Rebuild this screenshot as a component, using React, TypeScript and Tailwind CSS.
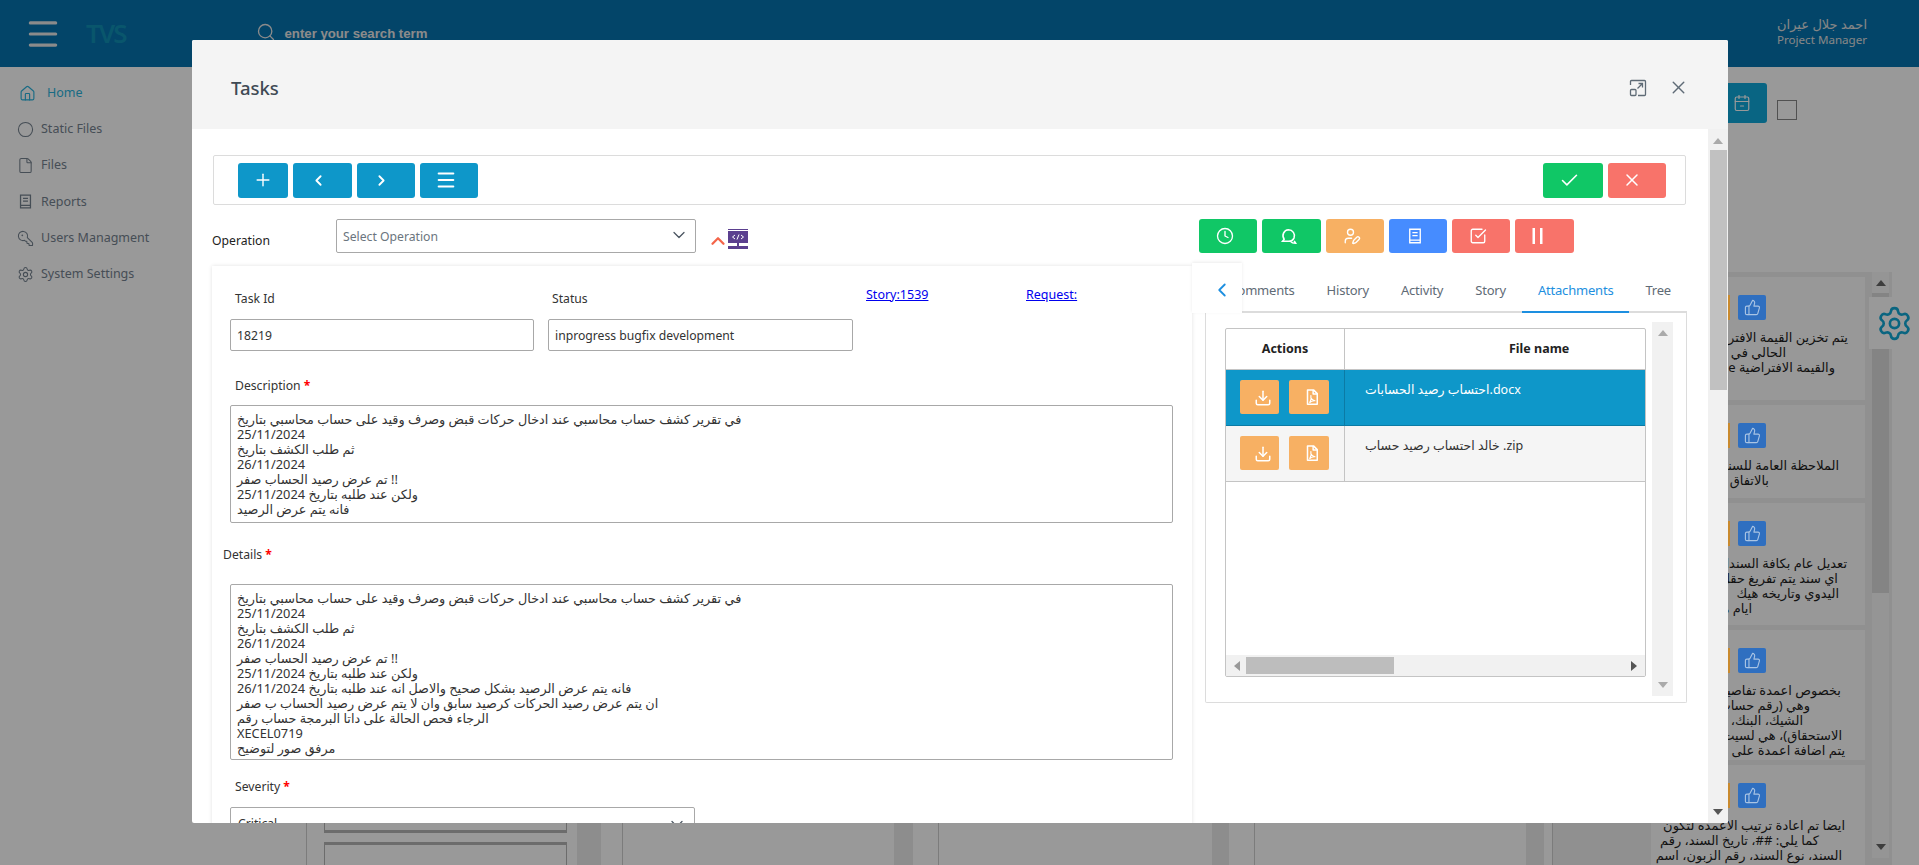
import {
  CalendarMinus2,
  Check,
  ChevronDown,
  ChevronLeft,
  ChevronRight,
  ChevronUp,
  Circle,
  Clock,
  Download,
  File,
  House,
  KeyRound,
  Menu,
  Plus,
  Search,
  Settings,
  SquareCheckBig,
  ThumbsUp,
  UserPen,
  X,
} from "lucide-react";
import { ReactNode } from "react";

const descriptionText = `في تقرير كشف حساب محاسبي عند ادخال حركات قبض وصرف وقيد على حساب محاسبي بتاريخ
25/11/2024
ثم طلب الكشف بتاريخ
26/11/2024
\u200F!! تم عرض رصيد الحساب صفر
ولكن عند طلبه بتاريخ 25/11/2024
فانه يتم عرض الرصيد`;

const detailsText = `في تقرير كشف حساب محاسبي عند ادخال حركات قبض وصرف وقيد على حساب محاسبي بتاريخ
25/11/2024
ثم طلب الكشف بتاريخ
26/11/2024
\u200F!! تم عرض رصيد الحساب صفر
ولكن عند طلبه بتاريخ 25/11/2024
فانه يتم عرض الرصيد بشكل صحيح والاصل انه عند طلبه بتاريخ 26/11/2024
ان يتم عرض رصيد الحركات كرصيد سابق وان لا يتم عرض رصيد الحساب ب صفر
الرجاء فحص الحالة على داتا البرمجة حساب رقم
XECEL0719
مرفق صور لتوضيح`;

const BookIcon = ({ className }: { className?: string }) => (
  <svg viewBox="0 0 24 24" fill="none" stroke="currentColor" strokeWidth="1.8" className={className}>
    <path d="M5 3h14v18H5z" />
    <path d="M5 17.5h14M8.5 7.5h7M8.5 11.5h7" />
  </svg>
);

const ChatIcon = ({ className }: { className?: string }) => (
  <svg viewBox="0 0 24 24" fill="none" stroke="currentColor" strokeWidth="2" className={className}>
    <path d="M12 3.500a7.500 7.500 0 0 1 7 10.200c-1 2.400-3.600 4.300-7 4.300H4.500l2-2.600a7.500 7.500 0 0 1 5.500-11.900z" />
    <path d="M15 18.500c1 1.500 2.500 2 6 2l-1.800-3" />
  </svg>
);

const PdfIcon = ({ className }: { className?: string }) => (
  <svg viewBox="0 0 24 24" fill="none" stroke="currentColor" strokeWidth="2" strokeLinejoin="round" className={className}>
    <path d="M6 2.500h8l5 5V21.500H6z" />
    <path d="M13.500 2.500v5.500H19" />
    <path d="M10.500 10c-.5 3 1.500 6 5.500 7-2.500-.2-5.500.6-7 2.500 1.500-3 2.500-6 1.500-9.500z" strokeWidth="1.500" />
  </svg>
);

const PauseBars = ({ className }: { className?: string }) => (
  <svg viewBox="0 0 12 18" fill="currentColor" className={className}>
    <rect x="0.500" y="1" width="2.500" height="16" />
    <rect x="8" y="1" width="2.500" height="16" />
  </svg>
);

const Triangle = ({ dir, className }: { dir: "up" | "down" | "left" | "right"; className: string }) => {
  const points = {
    up: "0,8 5,2 10,8",
    down: "0,2 5,8 10,2",
    left: "8,0 2,5 8,10",
    right: "2,0 8,5 2,10",
  };
  return (
    <svg viewBox="0 0 10 10" className={className} fill="currentColor">
      <polygon points={points[dir]} />
    </svg>
  );
};

const ToolButton = ({ className, children }: { className: string; children: ReactNode }) => (
  <button className={`flex h-[35px] items-center rounded-[3px] text-white ${className}`}>{children}</button>
);

const ActionButton = ({ className, children }: { className: string; children: ReactNode }) => (
  <button className={`flex h-[34px] items-center rounded-[3px] pl-[17px] text-white ${className}`}>{children}</button>
);

const navItems = [
  { label: "Static Files", icon: <Circle size={17} strokeWidth={1.5} /> },
  { label: "Files", icon: <File size={17} strokeWidth={1.5} /> },
  { label: "Reports", icon: <BookIcon className="size-[17px]" /> },
  { label: "Users Managment", icon: <KeyRound size={17} strokeWidth={1.5} className="-scale-x-100" /> },
  { label: "System Settings", icon: <Settings size={17} strokeWidth={1.5} /> },
];

const sideCards = [
  {
    height: "h-[123px]",
    lines: [
      { text: "يتم تخزين القيمة الافتراضية في الحقل", pad: "pr-[17px]" },
      { text: "الحالي في", pad: "pr-[79px]" },
      { text: "والقيمة الافتراضية value", pad: "pr-[30px]" },
    ],
  },
  {
    height: "h-[93px]",
    lines: [
      { text: "الملاحظة العامة للسند", pad: "pr-[26px]" },
      { text: "بالاتفاق", pad: "pr-[96px]" },
    ],
  },
  {
    height: "h-[122px]",
    lines: [
      { text: "تعديل عام بكافة السندات", pad: "pr-[18px]" },
      { text: "اي سند يتم تفريغ حقل", pad: "pr-[27px]" },
      { text: "اليدوي وتاريخه هيك", pad: "pr-[26px]" },
      { text: "ايام من", pad: "pr-[113px]" },
    ],
  },
  {
    height: "h-[130px]",
    lines: [
      { text: "بخصوص اعمدة تفاصيل", pad: "pr-[24px]" },
      { text: "وهي (رقم حساب", pad: "pr-[55px]" },
      { text: "الشيك، البنك،", pad: "pr-[62px]" },
      { text: "الاستحقاق)، هي لسيت", pad: "pr-[23px]" },
      { text: "يتم اضافة اعمدة على", pad: "pr-[20px]" },
      { text: "كما قال الفاضل", pad: "pr-[40px]" },
    ],
  },
  {
    height: "h-[100px]",
    lines: [
      { text: "ايضا تم اعادة ترتيب الاعمده لتكون", pad: "pr-[20px]" },
      { text: "كما يلي: ##، تاريخ السند، رقم", pad: "pr-[46px]" },
      { text: "السند، نوع السند، رقم الزبون، اسم", pad: "pr-[23px]" },
    ],
  },
];

const attachments = ["احتساب رصيد الحسابات.docx", "خالد احتساب رصيد حساب .zip"];

const BoardColumn = ({ children, track }: { children?: ReactNode; track: string }) => (
  <div className="relative h-full w-[316px] shrink-0 border-l border-[#cfcfcf]">
    {children}
    <div className={`absolute top-0 bottom-0 bg-[#ececec] ${track}`} />
  </div>
);

export default function App() {
  return (
    <div className="relative h-[865px] w-full overflow-hidden bg-white font-['Noto_Sans','DejaVu_Sans',sans-serif] text-[12.200px] text-[#333]">
      {/* page behind the dialog */}
      <header className="flex h-[67px] items-center bg-[#0573af] text-white">
        <Menu size={38} strokeWidth={2} className="ml-[24px] text-[#e8e8e8]" />
        <span className="ml-[24px] text-[26px] font-semibold tracking-[-2px] text-[#0f8fb5]">TVS</span>
        <Search size={20} strokeWidth={1.6} className="mb-[3px] ml-[130px] text-[#e8e8e8]" />
        <span className="mb-[-1px] ml-[9px] font-['Liberation_Sans',sans-serif] text-[13.200px] font-bold text-[#e8e8e8]">
          enter your search term
        </span>
        <div className="mt-[-3px] ml-auto w-[142px] leading-[16px] text-[#e0e0e0]">
          <div className="text-[13px]">احمد جلال عيران</div>
          <div className="text-[11.600px]">Project Manager</div>
        </div>
      </header>

      <div className="flex h-[798px]">
        <aside className="w-[287px] shrink-0 bg-white pt-[8px] text-[12.500px] text-[#75828f]">
          <div className="flex h-[36px] items-center pl-[19px] text-[#2ab3dd]">
            <House size={17} strokeWidth={1.6} />
            <span className="ml-[11px]">Home</span>
          </div>
          {navItems.map((item) => (
            <div key={item.label} className="flex h-[36.400px] items-center pl-[17px]">
              {item.icon}
              <span className="ml-[7px]">{item.label}</span>
            </div>
          ))}
        </aside>

        <main className="min-w-0 flex-1">
          <div className="flex h-[205px] items-start pt-[16px] pl-[1400px]">
            <div className="flex h-[40px] w-[80px] items-center justify-end rounded-[3px] bg-[#10a9da] pr-[16px] text-white">
              <CalendarMinus2 size={18} strokeWidth={1.6} />
            </div>
            <div className="mt-[17px] ml-[10px] size-[20px] border border-[#888]" />
          </div>

          <div className="flex h-[593px] overflow-hidden pl-[19px]">
            <BoardColumn track="left-[270px] w-[24px]">
              <div className="pt-[481px] pl-[17px]">
                <div className="h-[80px] w-[243px] border-x border-b-[3px] border-[#b5b5b5]" />
                <div className="mt-[9px] h-[80px] w-[243px] border-x border-t-[3px] border-[#b5b5b5]" />
              </div>
            </BoardColumn>
            <BoardColumn track="left-[271px] w-[19px]" />
            <BoardColumn track="left-[273px] w-[17px]" />
            <div className="relative h-full w-[298px] shrink-0 border-l border-[#cfcfcf]">
              <div className="absolute top-0 bottom-0 left-[271px] w-[18px] bg-[#ececec]" />
            </div>
            <div className="flex h-full w-[340px] shrink-0 border-l border-[#cfcfcf] bg-[#f0f0f0] pl-[98px]">
              <div className="flex h-full w-[214px] flex-col gap-[5px] pt-[5px]">
                {sideCards.map((card, i) => (
                  <div key={i} className={`shrink-0 overflow-hidden bg-[#fefefe] ${card.height}`}>
                    <div className="mt-[18px] flex h-[25px] pl-[77px]">
                      <div className="relative z-10 mr-[8px] w-[2px] bg-[#c98a2e]" />
                      <div className="relative z-10 flex w-[28px] items-center justify-center rounded-[2px] bg-[#2f6fc0] text-[#a9c4e4]">
                        <ThumbsUp size={17} strokeWidth={1.6} />
                      </div>
                    </div>
                    <div className="mt-[10px] text-[13px] leading-[15px] whitespace-nowrap text-[#1d1d1d]">
                      {card.lines.map((line) => (
                        <div key={line.text} dir="rtl" className={line.pad}>
                          {line.text}
                        </div>
                      ))}
                    </div>
                  </div>
                ))}
              </div>
              <div className="ml-[7px] flex h-[586px] w-[17px] flex-col items-center bg-[#f8f8f8] text-[#666]">
                <Triangle dir="up" className="mt-[6px] size-[10px]" />
                <div className="mt-[5px] h-[300px] w-full bg-[#dcdcdc]" />
                <Triangle dir="down" className="mt-auto mb-[6px] size-[10px]" />
              </div>
            </div>
          </div>
        </main>
      </div>

      <div className="absolute top-[297px] right-0 flex h-[52px] w-[50px] items-center justify-center bg-white">
        <Settings size={37} strokeWidth={1.7} className="text-[#12a9d6]" />
      </div>

      {/* dim layer */}
      <div className="absolute inset-0 bg-black/40" />

      {/* dialog */}
      <div className="absolute top-[40px] left-[192px] z-20 flex h-[783px] w-[1536px] flex-col overflow-hidden rounded-[2px] bg-white">
        <div className="flex h-[89px] shrink-0 items-center bg-[#f4f4f4] pr-[39px] pl-[39px]">
          <h2 className="mt-[6px] text-[18.500px] font-medium text-[#3f4a54]">Tasks</h2>
          <svg viewBox="0 0 18 18" fill="none" stroke="#5f6b76" strokeWidth="1.300" className="mt-[6px] ml-auto size-[18px]">
            <path d="M6 1.500h9.500a1 1 0 0 1 1 1v13a1 1 0 0 1-1 1H9" />
            <path d="M1.500 6V2.500a1 1 0 0 1 1-1H6" />
            <path d="M8.500 9.500l5-5M9.500 4.500h4v4" />
            <rect x="1.500" y="10.500" width="5.500" height="6" rx="1" />
          </svg>
          <X size={21} strokeWidth={1.6} className="mt-[6px] ml-[21px] text-[#5f6b76]" />
        </div>

        <div className="flex min-h-0 flex-1">
          <div className="min-w-0 flex-1 overflow-hidden pt-[26px] pl-[21px]">
            <div className="flex h-[50px] w-[1473px] items-center rounded-[2px] border border-[#dcdcdc] pr-[19px] pl-[24px]">
              <div className="flex gap-[5px]">
                <ToolButton className="w-[50px] justify-center bg-[#0e97c9]">
                  <Plus size={20} strokeWidth={1.7} />
                </ToolButton>
                <ToolButton className="w-[59px] pl-[17px] bg-[#0e97c9]">
                  <ChevronLeft size={17} strokeWidth={2.600} />
                </ToolButton>
                <ToolButton className="w-[58px] pl-[16px] bg-[#0e97c9]">
                  <ChevronRight size={17} strokeWidth={2.600} />
                </ToolButton>
                <ToolButton className="w-[58px] pl-[15px] bg-[#0e97c9]">
                  <Menu size={22} strokeWidth={2.200} />
                </ToolButton>
              </div>
              <div className="ml-auto flex gap-[5px]">
                <ToolButton className="w-[60px] pl-[16px] bg-[#10c766]">
                  <Check size={21} strokeWidth={1.800} />
                </ToolButton>
                <ToolButton className="w-[58px] pl-[14px] bg-[#f8736a]">
                  <X size={20} strokeWidth={1.800} />
                </ToolButton>
              </div>
            </div>

            <div className="mt-[14px] flex h-[34px] items-start">
              <div className="ml-[-1px] w-[124px] pt-[13px] text-[#222]">Operation</div>
              <div className="flex h-[34px] w-[360px] items-center justify-between rounded-[2px] border border-[#a8a8a8] px-[6px] pt-[2px] text-[#6b757e]">
                <span>Select Operation</span>
                <ChevronDown size={20} strokeWidth={1.500} className="mt-[-4px] text-[#4a5560]" />
              </div>
              <ChevronUp size={22} strokeWidth={2.500} className="mt-[11px] ml-[11px] text-[#f4654a]" />
              <svg viewBox="0 0 20 20" className="mt-[10px] ml-[-1px] size-[20px]">
                <rect x="0" y="0" width="20" height="1" fill="#5b3f8f" />
                <rect x="0" y="2" width="20" height="12" fill="#5b3f8f" />
                <path d="M7 6l-2.500 2L7 10M13 6l2.500 2L13 10M11 5.500L9 10.500" stroke="#fff" strokeWidth="1" fill="none" />
                <rect x="9" y="14" width="2" height="3" fill="#5b3f8f" />
                <rect x="0" y="17" width="20" height="3" fill="#5b3f8f" />
              </svg>
              <div className="ml-[451px] flex gap-[5px]">
                <ActionButton className="w-[58px] bg-[#10c766]">
                  <Clock size={18} strokeWidth={1.800} />
                </ActionButton>
                <ActionButton className="w-[59px] bg-[#10c766]">
                  <ChatIcon className="size-[19px]" />
                </ActionButton>
                <ActionButton className="w-[58px] bg-[#f7b063]">
                  <UserPen size={18} strokeWidth={1.800} />
                </ActionButton>
                <ActionButton className="w-[58px] bg-[#468cff]">
                  <BookIcon className="size-[18px]" />
                </ActionButton>
                <ActionButton className="w-[58px] bg-[#f8736a]">
                  <SquareCheckBig size={18} strokeWidth={1.800} />
                </ActionButton>
                <ActionButton className="w-[59px] bg-[#f8736a]">
                  <PauseBars className="h-[18px] w-[12px]" />
                </ActionButton>
              </div>
            </div>

            <div className="mt-[13px] flex items-start">
              {/* left form card */}
              <div className="ml-[-1px] h-[560px] w-[980px] shrink-0 pt-[3px] shadow-[0_0_4px_rgba(0,0,0,0.12)]">
                <div className="pl-[18px] pt-[21px]">
                  <div className="flex h-[18px] items-start leading-[18px]">
                    <span className="ml-[5px] w-[317px] text-[#333]">Task Id</span>
                    <span className="w-[314px] text-[#333]">Status</span>
                    <a className="mt-[-4px] w-[160px] text-[12.500px] text-[#0000ee] underline">Story:1539</a>
                    <a className="mt-[-4px] text-[12.500px] text-[#0000ee] underline">Request:</a>
                  </div>
                  <div className="mt-[11px] flex gap-[14px]">
                    <input
                      readOnly
                      value="18219"
                      className="h-[32px] w-[304px] rounded-[2px] border border-[#a8a8a8] px-[6px] text-[12.200px] text-[#333] outline-none"
                    />
                    <input
                      readOnly
                      value="inprogress bugfix development"
                      className="h-[32px] w-[305px] rounded-[2px] border border-[#a8a8a8] px-[6px] text-[12.200px] text-[#333] outline-none"
                    />
                  </div>

                  <div className="mt-[26px] ml-[5px] h-[18px] leading-[18px]">
                    Description <span className="font-bold text-[#f00]">*</span>
                  </div>
                  <textarea
                    readOnly
                    value={descriptionText}
                    className="mt-[10px] block h-[118px] w-[943px] resize-none overflow-hidden rounded-[2px] border border-[#a8a8a8] px-[6px] pt-[6px] text-[12.800px] leading-[15px] text-[#333] outline-none"
                  />

                  <div className="mt-[23px] ml-[-7px] h-[18px] leading-[18px]">
                    Details <span className="font-bold text-[#f00]">*</span>
                  </div>
                  <textarea
                    readOnly
                    value={detailsText}
                    className="mt-[20px] block h-[176px] w-[943px] resize-none overflow-hidden rounded-[2px] border border-[#a8a8a8] px-[6px] pt-[6px] text-[12.800px] leading-[15px] text-[#333] outline-none"
                  />

                  <div className="mt-[18px] ml-[5px] h-[18px] leading-[18px]">
                    Severity <span className="font-bold text-[#f00]">*</span>
                  </div>
                  <div className="mt-[11px] flex h-[34px] w-[465px] items-center justify-between rounded-[2px] border border-[#a8a8a8] px-[7px]">
                    <span>Critical</span>
                    <ChevronDown size={20} strokeWidth={1.500} className="text-[#4a5560]" />
                  </div>
                </div>
              </div>

              {/* right tabs */}
              <div className="relative ml-[13px] w-[482px] shrink-0">
                <div className="absolute top-[-3px] left-[-13px] z-10 flex h-[50px] w-[50px] items-center justify-center bg-white pt-[3px] pl-[10px] shadow-[0_-1px_3px_rgba(0,0,0,0.08)]">
                  <ChevronLeft size={22} strokeWidth={2} className="text-[#1d8fe0]" />
                </div>
                <div className="flex h-[47px] justify-end overflow-hidden text-[13px] tracking-[-0.2px] text-[#5f6b76] shadow-[inset_0_-2px_0_#dcdcdc]">
                  <span className="px-4 pt-[15px] whitespace-nowrap">Comments</span>
                  <span className="px-4 pt-[15px]">History</span>
                  <span className="px-4 pt-[15px]">Activity</span>
                  <span className="px-4 pt-[15px]">Story</span>
                  <span className="border-b-2 border-[#1d8fe0] px-4 pt-[15px] text-[#1d8fe0]">Attachments</span>
                  <span className="px-4 pt-[15px]">Tree</span>
                </div>
                <div className="flex h-[390px] items-start rounded-b-[2px] border border-t-0 border-[#dcdcdc] pt-[9px] pl-[19px]">
                  <div className="mt-[6px] flex h-[349px] w-[421px] shrink-0 flex-col overflow-hidden rounded-[2px] border border-[#c4c4c4]">
                    <div className="flex h-[41px] shrink-0 border-b border-[#c4c4c4] text-[12.500px] font-bold text-[#222]">
                      <div className="flex w-[119px] items-center justify-center border-r border-[#c4c4c4]">Actions</div>
                      <div className="flex flex-1 items-center pl-[164px]">File name</div>
                    </div>
                    {attachments.map((name, i) => (
                      <div
                        key={name}
                        className={`flex h-[56px] shrink-0 border-b ${i === 0 ? "border-[#0b7ba5] bg-[#0e97c9] text-white" : "border-[#c4c4c4] bg-[#f5f5f5] text-[#333]"}`}
                      >
                        <div className={`flex w-[119px] gap-[10px] border-r pt-[10px] pl-[14px] ${i === 0 ? "border-[#0b7ba5]" : "border-[#c4c4c4]"}`}>
                          <button className="flex h-[34px] w-[39px] justify-center rounded-[2px] bg-[#f7b063] pt-[9px] pl-[6px] text-white">
                            <Download size={18} strokeWidth={2} />
                          </button>
                          <button className="flex h-[34px] w-[40px] justify-center rounded-[2px] bg-[#f7b063] pt-[8px] pl-[6px] text-white">
                            <PdfIcon className="size-[18px]" />
                          </button>
                        </div>
                        <div className="pt-[11px] pl-[20px] text-[12.500px]">{name}</div>
                      </div>
                    ))}
                    <div className="mt-auto flex h-[21px] shrink-0 items-center bg-[#f1f1f1]">
                      <Triangle dir="left" className="ml-[6px] size-[10px] text-[#999]" />
                      <div className="ml-[4px] h-[17px] w-[148px] bg-[#bdbdbd]" />
                      <Triangle dir="right" className="mr-[6px] ml-auto size-[10px] text-[#555]" />
                    </div>
                  </div>
                  <div className="ml-[6px] flex h-[374px] w-[21px] shrink-0 flex-col items-center justify-between bg-[#f1f1f1] py-[6px] text-[#aaa]">
                    <Triangle dir="up" className="size-[10px]" />
                    <Triangle dir="down" className="size-[10px]" />
                  </div>
                </div>
              </div>
            </div>
          </div>

          {/* dialog scrollbar */}
          <div className="flex w-[20px] shrink-0 flex-col items-center bg-[#f1f1f1]">
            <Triangle dir="up" className="mt-[7px] size-[10px] text-[#aaa]" />
            <div className="mt-[4px] h-[240px] w-[17px] bg-[#c1c1c1]" />
            <Triangle dir="down" className="mt-auto mb-[6px] size-[10px] text-[#555]" />
          </div>
        </div>
      </div>
    </div>
  );
}
